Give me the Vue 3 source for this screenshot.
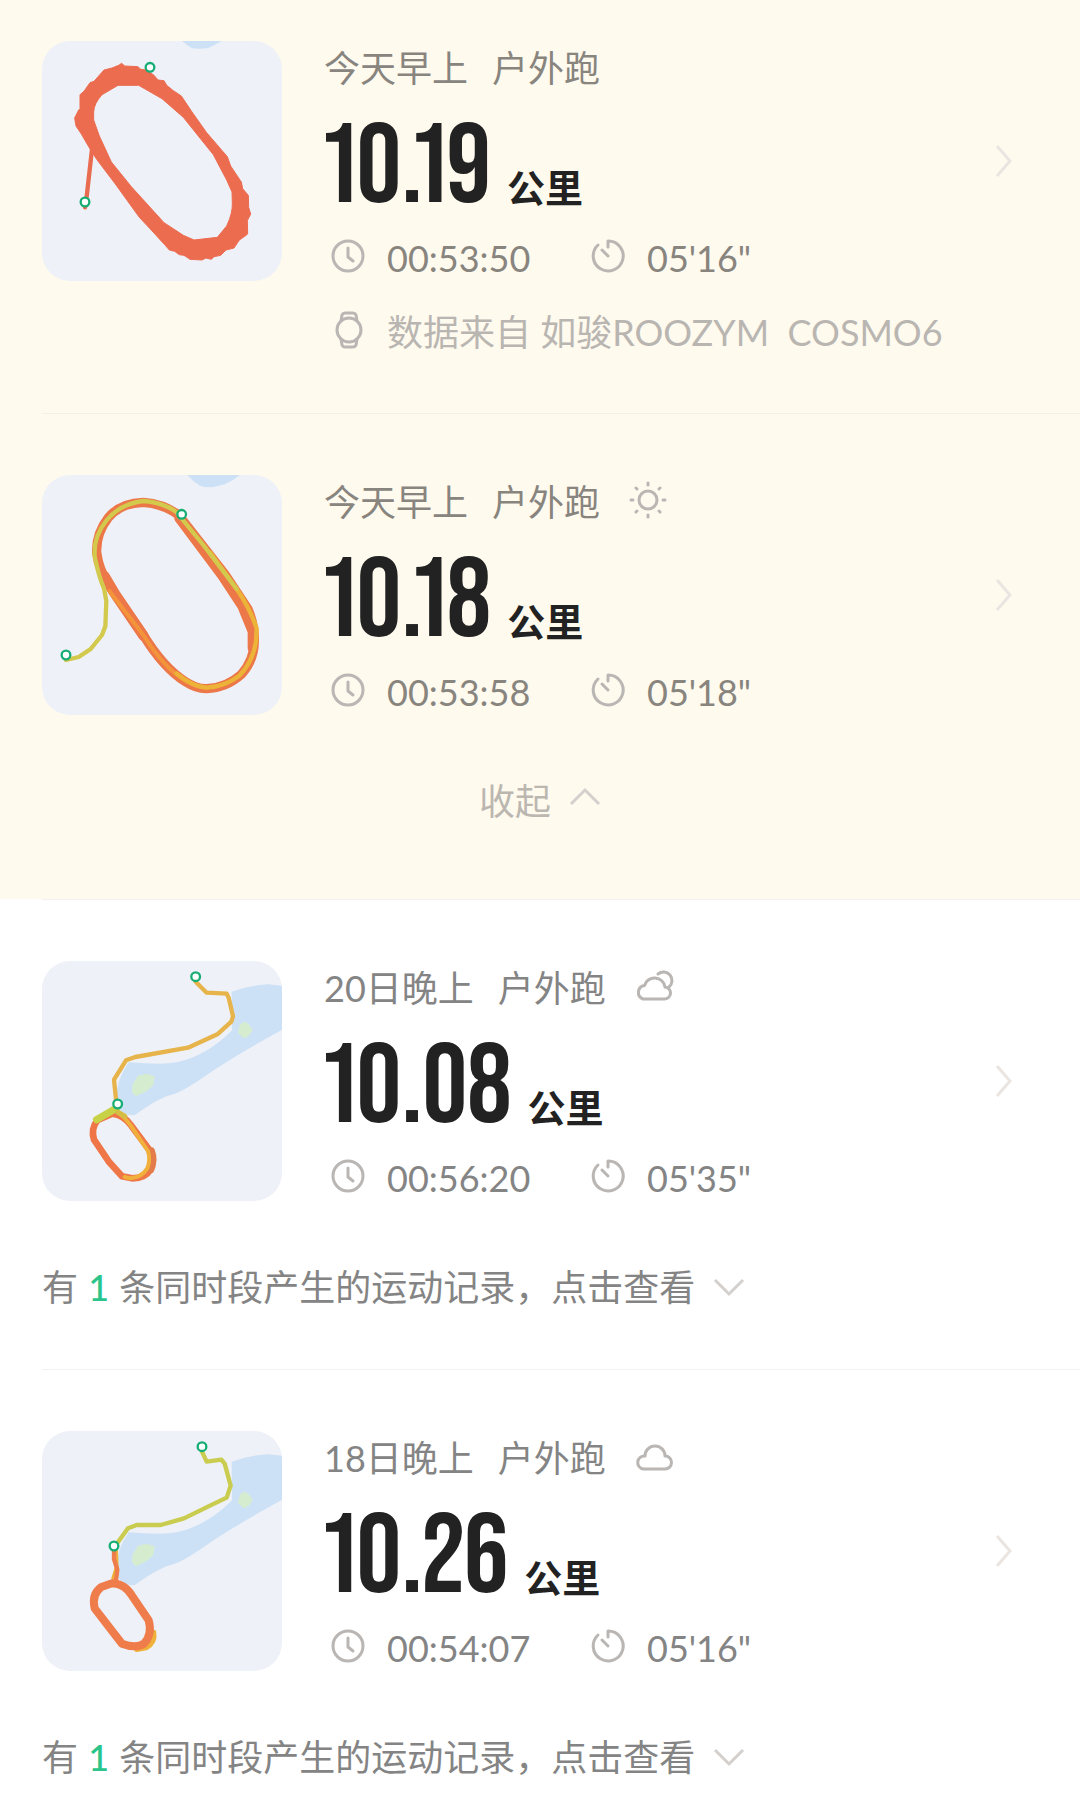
<script setup>
import { ref } from 'vue'

const WATER = 'M605 122 Q660 102 715 100 L756 104 V236 Q620 312 540 365 Q470 415 430 430 Q390 438 315 492 Q285 496 262 468 Q250 400 296 334 Q400 342 440 334 Q530 315 606 238 Z'

const groups = ref([
  {
    id: 'today',
    expanded: true,
    highlighted: true,
    runs: [
      {
        id: 1,
        day: '今天早上',
        distance: '10.19',
        duration: '00:53:50',
        pace: '05\'16"',
        source: '如骏ROOZYM\u00a0 COSMO6',
        map: {
          viewBox: '36 33 720 720',
          water: 'M456 33 H576 Q560 42 535 54 Q505 58 485 54 Q468 44 456 33 Z',
          lines: [
            { d: 'M186 358 L170 500 L165 532', color: '#e96b50', width: 13 }
          ],
          // the ring is filled rather than stroked, its width varies along the lap
          ring: 'M266 106 L275 100 L284 108 L324 110 L332 118 L350 120 L372 136 L384 150 L402 152 L410 166 L430 182 L454 198 L486 246 L530 308 L592 380 L602 408 L634 456 L638 476 L655 496 L656 532 L662 552 L652 572 L653 612 L640 622 L628 630 L612 654 L588 660 L572 676 L552 680 L544 688 L528 684 L516 690 L480 688 L462 676 L448 674 L434 664 L418 660 L404 644 L360 596 L328 562 L256 462 L200 388 L176 350 L154 312 L138 288 L134 264 L146 240 L150 236 L150 194 L162 184 L180 158 L192 154 L206 138 L222 120 L246 114 Z M264 166 L216 194 Q192 220 191 246 L191 270 L208 318 L244 396 L304 470 L402 578 L460 616 L492 630 L562 622 L590 588 Q608 550 607 520 L606 486 L590 450 L550 374 L460 262 L396 206 L326 166 Z',
          pins: [[360, 112], [165, 516]]
        }
      },
      {
        id: 2,
        day: '今天早上',
        weather: 'sun',
        distance: '10.18',
        duration: '00:53:58',
        pace: '05\'18"',
        map: {
          viewBox: '36 30 720 720',
          water: 'M472 30 H630 Q608 48 584 58 L550 66 Q524 68 510 62 L490 48 Z',
          lines: [
            { d: 'M340 112 Q270 114 235 158 Q198 206 200 262 Q206 312 236 360 L340 510 Q400 608 466 650 Q500 672 530 671 Q590 668 634 628 Q672 586 673 530 Q674 480 654 432 L585 328 L446 150 Q400 116 340 112 Z', color: '#ec7748', width: 28 },
            { d: 'M224 334 L256 388 L340 512', color: '#ec7748', width: 31 },
            { d: 'M446 160 L576 334 L636 426 L666 500 L666 550', color: '#ec7748', width: 26 },
            { d: 'M238 378 L340 510 Q400 606 462 645 Q500 668 530 668', color: '#f4943a', width: 12 },
            { d: 'M440 626 Q490 666 530 668 Q586 664 628 632 Q668 592 678 530 L680 490 Q660 430 620 372 L540 262', color: '#ecb338', width: 13 },
            { d: 'M620 372 L520 240 L440 142 Q400 112 340 108 Q270 116 228 168 Q190 216 194 274 Q206 334 222 370 L229 408 L226 484 L216 510 L182 552 L146 576 L108 585', color: '#d2c94d', width: 13 }
          ],
          pins: [[455, 148], [108, 570]]
        }
      }
    ]
  },
  {
    id: 'day-20',
    expanded: false,
    hidden: 1,
    runs: [
      {
        id: 3,
        day: '20日晚上',
        weather: 'partly',
        distance: '10.08',
        duration: '00:56:20',
        pace: '05\'35"',
        map: {
          viewBox: '36 30 720 720',
          water: WATER,
          islands: true,
          lines: [
            { d: 'M497 92 L530 125 L590 128 L596 140 L609 196 L604 212 L562 250 L474 290 L316 318 L288 328 L252 386 L258 446', color: '#e6b44b', width: 13 },
            { d: 'M246 488 Q282 492 304 524 L356 594 Q374 624 362 654 Q346 682 306 682 L276 676 L238 634 L192 566 Q182 534 202 508 Z', color: '#ee7647', width: 20 },
            { d: 'M364 600 Q374 626 362 656', color: '#e37b4a', width: 22 },
            { d: 'M262 482 Q282 496 304 526 L354 600 Q362 626 352 652 Q334 680 300 682 L284 678', color: '#f0b03b', width: 12 },
            { d: 'M258 472 L200 506', color: '#c7d246', width: 22 },
            { d: 'M264 484 L284 496', color: '#d5bd45', width: 16 }
          ],
          pins: [[497, 77], [263, 459]]
        }
      }
    ]
  },
  {
    id: 'day-18',
    expanded: false,
    hidden: 1,
    runs: [
      {
        id: 4,
        day: '18日晚上',
        weather: 'cloud',
        distance: '10.26',
        duration: '00:54:07',
        pace: '05\'16"',
        map: {
          viewBox: '36 30 720 720',
          water: WATER,
          islands: true,
          lines: [
            { d: 'M516 92 L530 122 L574 116 L584 128 L602 194 L590 230 L540 254 L462 292 L392 312 L320 312 L294 322 L262 366', color: '#c9cc4f', width: 13 },
            { d: 'M258 390 L260 440 L250 472', color: '#efb13a', width: 12 },
            { d: 'M371 634 Q376 664 348 680 L320 685', color: '#efb13a', width: 16 },
            { d: 'M252 388 L252 414 L262 446 L258 478', color: '#ef7d4b', width: 13 },
            { d: 'M246 487 Q284 488 306 524 L356 598 Q368 640 342 668 Q318 684 276 668 L240 622 L194 562 Q184 520 214 498 Z', color: '#ef7d4b', width: 24 }
          ],
          pins: [[516, 77], [252, 375]]
        }
      }
    ]
  }
])

const toggle = (group) => {
  group.expanded = !group.expanded
}
</script>

<template>
  <main class="history">
    <section v-for="group in groups" :key="group.id" class="group" :class="{ highlighted: group.highlighted }">
      <article v-for="run in group.runs" :key="run.id" class="run">
        <svg class="map" :viewBox="run.map.viewBox" aria-hidden="true">
          <path :d="run.map.water" fill="#cde1f6" />
          <template v-if="run.map.islands">
            <path d="M324 374 L350 368 L374 376 L370 402 L350 420 L318 436 L306 424 L308 400 Z" fill="#d5eccf" />
            <path d="M630 220 L646 212 L658 222 L668 238 L656 254 L642 262 L624 246 Z" fill="#d5eccf" />
          </template>
          <path
            v-for="(line, i) in run.map.lines"
            :key="i"
            :d="line.d"
            :stroke="line.color"
            :stroke-width="line.width"
            fill="none"
            stroke-linecap="round"
            stroke-linejoin="round"
          />
          <path
            v-if="run.map.ring"
            :d="run.map.ring"
            fill="#ec6c50"
            fill-rule="evenodd"
            stroke="#ec6c50"
            stroke-width="3"
            stroke-linejoin="round"
          />
          <circle
            v-for="([x, y], i) in run.map.pins"
            :key="`pin-${i}`"
            :cx="x"
            :cy="y"
            r="13"
            fill="#fff"
            stroke="#17ad74"
            stroke-width="7"
          />
        </svg>

        <div class="details">
          <h2 class="title">
            <span>{{ run.day }}</span>
            <span>户外跑</span>
            <svg v-if="run.weather === 'sun'" class="weather" viewBox="0 0 40 40" aria-label="晴">
              <circle cx="20" cy="20" r="9" />
              <path d="M20 3v2M20 35v2M3 20h2M35 20h2M8 8l1 1M31 31l1 1M8 32l1-1M31 9l1-1" />
            </svg>
            <svg v-else-if="run.weather === 'partly'" class="weather" viewBox="0 0 40 40" aria-label="多云">
              <path d="M9 33H30a6 6 0 0 0 1-12A10.500 10.500 0 0 0 10.500 19.500a7 7 0 0 0-1.500 13.500Z" />
              <path d="M24 8a8.500 8.500 0 1 1 11 13" />
            </svg>
            <svg v-else-if="run.weather === 'cloud'" class="weather" viewBox="0 0 40 40" aria-label="阴">
              <path d="M9.500 33H31a6.500 6.500 0 0 0 0-13A10 10 0 1 0 11 20a6.500 6.500 0 0 0-1.500 13Z" />
            </svg>
          </h2>
          <p class="distance">
            <strong>{{ run.distance }}</strong>
            <span>公里</span>
          </p>
          <div class="stats">
            <p class="stat">
              <svg class="icon" viewBox="0 0 46 40" aria-hidden="true">
                <circle cx="23" cy="20" r="15" />
                <path d="M23 12v9l5 4" />
              </svg>
              <span>{{ run.duration }}</span>
            </p>
            <p class="stat">
              <svg class="icon" viewBox="0 0 46 40" aria-hidden="true">
                <path d="M23 11V5a15 15 0 1 1-10 4" />
                <path d="M17 14l6 6" />
              </svg>
              <span>{{ run.pace }}</span>
            </p>
          </div>
          <p v-if="run.source" class="stat source">
            <svg class="icon" viewBox="0 0 46 40" aria-hidden="true">
              <circle cx="24" cy="20" r="12" />
              <path d="M16 11l1-6q1-2 3-2h8q2 0 3 2l1 6M16 29l1 6q1 2 3 2h8q2 0 3-2l1-6" />
            </svg>
            <span>数据来自 {{ run.source }}</span>
          </p>
        </div>

        <a class="open" href="#" :aria-label="`${run.day} ${run.distance} 公里`">
          <svg viewBox="0 0 20 36" aria-hidden="true">
            <path d="M3 3l13 15L3 33" />
          </svg>
        </a>
      </article>

      <button v-if="group.highlighted" type="button" class="toggle collapse" @click="toggle(group)">
        <span>收起</span>
        <svg class="chevron" viewBox="0 0 32 20" aria-hidden="true"><path d="M2 17L16 3l14 14" /></svg>
      </button>
      <button v-else type="button" class="toggle" @click="toggle(group)">
        <span>有 <b>{{ group.hidden }}</b> 条同时段产生的运动记录，点击查看</span>
        <svg class="chevron" viewBox="0 0 32 20" aria-hidden="true"><path d="M2 3l14 14L30 3" /></svg>
      </button>
    </section>
  </main>
</template>

<style>
body {
  background: #fff;
  overflow-x: hidden;
}
</style>

<style scoped>
.history {
  color: #848484;
  font-family: Lato, "Noto Sans CJK SC", sans-serif;
  font-size: 36px;
  line-height: 44px;
}

.group {
  padding: 0 0 60px 42px;
}

.highlighted {
  padding-bottom: 76px;
  background: #fffaee;
  color: #88847e;
}

.run {
  display: flex;
  align-items: flex-start;
  padding-top: 61px;
}

.highlighted .run:first-child {
  padding-top: 41px;
}

.run + .run,
.group + .group::before {
  border-top: 1px solid #f3f0ea;
}

.group + .group::before {
  content: "";
  display: block;
  border-color: #f2f2f2;
}

.map {
  flex: none;
  width: 240px;
  height: 240px;
  border-radius: 28px;
  background: #eef1f8;
}

.details {
  flex: 1;
  min-width: 0;
  margin-left: 42px;
}

.title {
  display: flex;
  align-items: center;
  gap: 24px;
  margin: 0;
  height: 54px;
  font-size: 36px;
  font-weight: 400;
}

.weather {
  width: 40px;
  height: 40px;
  margin: 0 0 4px 4px;
}

.weather,
.icon {
  fill: none;
  stroke: #b9b6b4;
  stroke-width: 3;
  stroke-linecap: round;
  stroke-linejoin: round;
}

.distance {
  display: flex;
  align-items: baseline;
  gap: 16px;
  height: 134px;
  margin: 0;
  padding-top: 7px;
  color: #222;
  line-height: 134px;
}

.distance strong {
  font-family: "Bebas Neue", "Open Sans Condensed", "Liberation Sans", sans-serif;
  font-size: 112px;
  font-weight: 400;
  font-variant-numeric: proportional-nums;
}

.distance span {
  font-size: 38px;
  font-weight: 700;
}

.stats {
  display: grid;
  grid-template-columns: 260px auto;
  justify-content: start;
}

.stat {
  display: flex;
  align-items: center;
  gap: 15px;
  margin: 0;
  white-space: nowrap;
}

.icon {
  flex: none;
  width: 48px;
  height: 40px;
  margin-bottom: 4px;
}

.source {
  margin: 30px 0 59px;
  color: #b9b6b2;
}

.open {
  display: flex;
  flex: none;
  align-items: center;
  height: 240px;
  margin-right: 66px;
}

.open svg {
  width: 20px;
  height: 36px;
  fill: none;
  stroke: #ebe5e2;
  stroke-width: 3;
}

.toggle {
  display: flex;
  align-items: center;
  gap: 18px;
  margin-top: 64px;
  padding: 0;
  border: 0;
  background: none;
  color: inherit;
  font: inherit;
  cursor: pointer;
}

.toggle b {
  margin: 0 1px;
  color: #2bc48a;
  font-weight: 500;
}

.collapse {
  margin-right: auto;
  margin-left: auto;
  padding-right: 42px;
  color: #bbb7b0;
}

.chevron {
  width: 32px;
  height: 20px;
  fill: none;
  stroke: #d3d0ce;
  stroke-width: 3;
}

.collapse .chevron {
  margin-bottom: 8px;
}
</style>
